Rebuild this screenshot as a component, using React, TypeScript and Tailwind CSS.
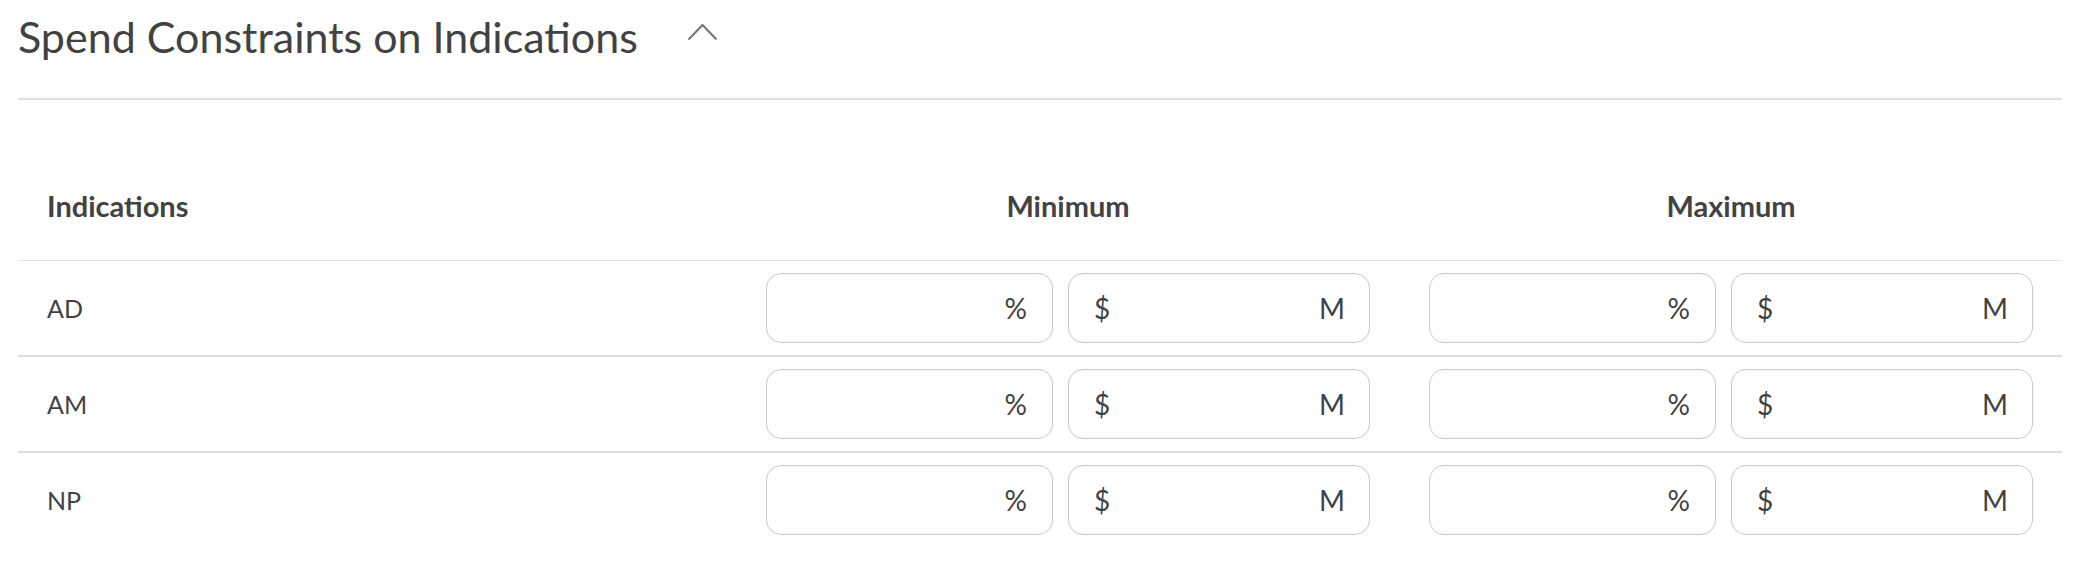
const indications = ["AD", "AM", "NP"];

function PercentInput() {
  return (
    <label className="flex h-[70px] w-[287px] items-center rounded-[15px] border border-[#c8c8c8] bg-white pr-[25px] pl-[20px]">
      <input type="text" className="min-w-0 flex-1 bg-transparent text-right outline-none" />
      <span className="ml-1">%</span>
    </label>
  );
}

function MoneyInput() {
  return (
    <label className="flex h-[70px] w-[302px] items-center rounded-[15px] border border-[#c8c8c8] bg-white pr-[24px] pl-[25px]">
      <span>$</span>
      <input type="text" className="mx-2 min-w-0 flex-1 bg-transparent outline-none" />
      <span>M</span>
    </label>
  );
}

function RangeGroup() {
  return (
    <div className="flex w-[604px] gap-[15px]">
      <PercentInput />
      <MoneyInput />
    </div>
  );
}

export default function App() {
  return (
    <div className="bg-white px-[18px] font-[family-name:Lato,sans-serif] text-[#424242]">
      <div className="flex h-[98px] items-start pt-[11px]">
        <h2 className="text-[43px] leading-[1.2] font-normal">Spend Constraints on Indications</h2>
        <svg className="mt-[12px] ml-[49px]" width="31" height="18" viewBox="0 0 31 18" fill="none">
          <path d="M1.5 16.5L15.5 2L29.5 16.5" stroke="#757575" strokeWidth="2" />
        </svg>
      </div>
      <div className="h-[2px] bg-[#e0e0e0]" />

      <div className="flex h-[161px] items-end border-b border-[#e0e0e0] pr-[29px] pb-[33px] text-[29px] font-bold">
        <div className="flex-1 pl-[29px]">Indications</div>
        <div className="w-[604px] text-center">Minimum</div>
        <div className="ml-[59px] w-[604px] text-center">Maximum</div>
      </div>

      {indications.map((name, i) => (
        <div
          key={name}
          className={
            i < indications.length - 1
              ? "flex h-[96px] items-center border-b-2 border-[#e0e0e0] pr-[29px] text-[28px]"
              : "flex h-[94px] items-center pr-[29px] text-[28px]"
          }
        >
          <div className="flex-1 pl-[29px] pt-[1px] text-[25px]">{name}</div>
          <RangeGroup />
          <div className="ml-[59px]">
            <RangeGroup />
          </div>
        </div>
      ))}
    </div>
  );
}
